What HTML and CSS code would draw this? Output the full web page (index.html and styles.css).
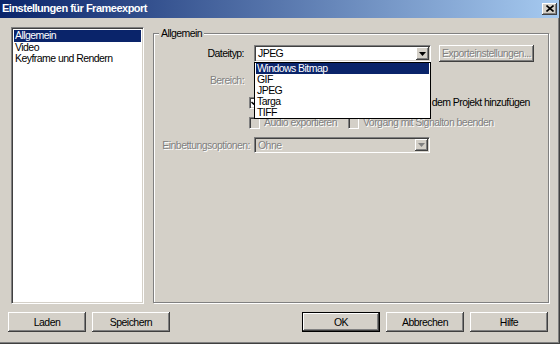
FILE: index.html
```html
<!DOCTYPE html>
<html lang="de">
<head>
<meta charset="utf-8">
<title>Einstellungen für Frameexport</title>
<link rel="stylesheet" href="styles.css">
</head>
<body>
<div class="window">
  <div class="titlebar">
    <span class="title">Einstellungen für Frameexport</span>
    <span class="close">
      <svg width="8" height="7" viewBox="0 0 8 7"><path d="M0.5 0.5 L7.5 6.5 M7.5 0.5 L0.5 6.5" stroke="#000" stroke-width="1.6" fill="none"/></svg>
    </span>
  </div>
  <div class="main">
    <ul class="listbox">
      <li class="sel">Allgemein</li>
      <li>Video</li>
      <li>Keyframe und Rendern</li>
    </ul>
    <div class="group">
      <span class="legend">Allgemein</span>
      <div class="row">
        <span class="lbl">Dateityp:</span>
        <div class="combo">
          <span class="combo-text">JPEG</span>
          <span class="arrow-btn"><svg width="7" height="4" viewBox="0 0 7 4"><path d="M0 0 H7 L3.5 4 Z" fill="#000"/></svg></span>
          <ul class="dropdown">
            <li class="sel">Windows Bitmap</li>
            <li>GIF</li>
            <li>JPEG</li>
            <li>Targa</li>
            <li>TIFF</li>
          </ul>
        </div>
        <span class="btn btn-export disabled">Exporteinstellungen...</span>
      </div>
      <div class="row row-range">
        <span class="lbl disabled">Bereich:</span>
      </div>
      <div class="checks">
        <div class="check-row">
          <span class="check-item">
            <span class="box"><svg width="7" height="7" viewBox="0 0 7 7"><path d="M0.5 3 L2.5 5 L6.5 1" stroke="#000" stroke-width="1.5" fill="none"/></svg></span>
            <span>Die exportierten Frames automatisch zu dem Projekt hinzufügen</span>
          </span>
        </div>
        <div class="check-row">
          <span class="check-item check-audio">
            <span class="box box-off"></span>
            <span class="disabled">Audio exportieren</span>
          </span>
          <span class="check-item">
            <span class="box box-off"></span>
            <span class="disabled">Vorgang mit Signalton beenden</span>
          </span>
        </div>
      </div>
      <div class="row row-embed">
        <span class="lbl lbl-embed disabled">Einbettungsoptionen:</span>
        <div class="combo combo-off">
          <span class="combo-text disabled">Ohne</span>
          <span class="arrow-btn"><svg width="7" height="4" viewBox="0 0 7 4"><path d="M0 0 H7 L3.5 4 Z" fill="#808080"/></svg></span>
        </div>
      </div>
    </div>
  </div>
  <div class="footer">
    <div class="btn-group">
      <span class="btn">Laden</span>
      <span class="btn">Speichern</span>
    </div>
    <div class="btn-group">
      <span class="btn btn-default">OK</span>
      <span class="btn">Abbrechen</span>
      <span class="btn">Hilfe</span>
    </div>
  </div>
</div>
</body>
</html>
```
FILE: styles.css
```css
* { box-sizing: border-box; margin: 0; padding: 0; }
html, body { width: 560px; height: 344px; overflow: hidden; }
body {
  font-family: "Liberation Sans", Arial, sans-serif;
  font-size: 10.5px;
  letter-spacing: -0.55px;
  line-height: 13px;
  color: #000;
  background: #d4d0c8;
}
.window {
  width: 560px;
  height: 344px;
  display: flex;
  flex-direction: column;
  background: #d4d0c8;
  border-right: 1px solid #404040;
  border-bottom: 1px solid #404040;
  box-shadow: inset -1px -1px 0 #808080;
}
.titlebar {
  height: 18px;
  flex: none;
  display: flex;
  align-items: center;
  justify-content: space-between;
  padding: 0 2px 1px 2px;
  background: linear-gradient(to right, #0a246a 0%, #a6caf0 100%);
}
.title {
  color: #fff;
  font-family: "Liberation Sans", Arial, sans-serif;
  font-weight: bold;
  font-size: 11px;
  letter-spacing: -0.5px;
}
.close {
  width: 15px;
  height: 12px;
  background: #d4d0c8;
  box-shadow: inset -1px -1px 0 #404040, inset 1px 1px 0 #fff, inset -2px -2px 0 #808080;
  display: flex;
  align-items: center;
  justify-content: center;
}
.main {
  display: flex;
  align-items: flex-start;
  gap: 9px;
  padding: 9px 0 0 11px;
  flex: none;
}
.listbox {
  width: 133px;
  height: 277px;
  list-style: none;
  background: #fff;
  border-top: 1px solid #808080;
  border-left: 1px solid #808080;
  border-right: 1px solid #fff;
  border-bottom: 1px solid #fff;
  box-shadow: inset 1px 1px 0 #404040, inset -1px -1px 0 #d4d0c8;
  padding: 1px;
}
.listbox li {
  height: 11.5px;
  line-height: 11.5px;
  padding-left: 1px;
  margin: 0 1px;
}
.listbox li:first-child { margin-top: 1px; }
.sel { background: #0a246a; color: #fff; }
.group {
  position: relative;
  margin-top: 6px;
  width: 396px;
  height: 270px;
  border: 1px solid #808080;
  box-shadow: inset 1px 1px 0 #fff, 1px 1px 0 #fff;
  padding-top: 11px;
}
.legend {
  position: absolute;
  top: -7px;
  left: 5px;
  padding: 0 2px;
  background: #d4d0c8;
  line-height: 13px;
}
.row {
  display: flex;
  align-items: center;
}
.lbl {
  flex: none;
  width: 90px;
  margin-right: 10px;
  text-align: right;
}
.lbl-embed { width: 96px; margin-right: 4px; }
.disabled { color: #808080; text-shadow: 1px 1px 0 #fff; }
.combo {
  position: relative;
  flex: none;
  width: 177px;
  height: 17px;
  background: #fff;
  border-top: 1px solid #808080;
  border-left: 1px solid #808080;
  border-right: 1px solid #fff;
  border-bottom: 1px solid #fff;
  box-shadow: inset 1px 1px 0 #404040, inset -1px -1px 0 #d4d0c8;
  display: flex;
  align-items: center;
  justify-content: space-between;
  padding: 1px 1px 1px 3px;
}
.combo-off { width: 176px; height: 16px; background: #d4d0c8; }
.arrow-btn {
  width: 13px;
  height: 13px;
  background: #d4d0c8;
  box-shadow: inset -1px -1px 0 #404040, inset 1px 1px 0 #fff, inset -2px -2px 0 #808080;
  display: flex;
  align-items: center;
  justify-content: center;
}
.combo-off .arrow-btn { height: 12px; }
.dropdown {
  position: absolute;
  left: -1px;
  top: 16px;
  width: 177px;
  height: 57px;
  list-style: none;
  background: #fff;
  border: 1px solid #000;
  padding: 0 1px;
  z-index: 2;
}
.dropdown li {
  height: 11px;
  line-height: 11px;
  padding-left: 1px;
}
.btn {
  display: flex;
  align-items: center;
  justify-content: center;
  width: 78px;
  height: 20px;
  background: #d4d0c8;
  box-shadow: inset -1px -1px 0 #404040, inset 1px 1px 0 #fff, inset -2px -2px 0 #808080, inset 2px 2px 0 #d4d0c8;
}
.btn-export { width: 95px; height: 17px; margin-left: 8px; }
.btn-default { border: 1px solid #000; }
.row-range { margin-top: 12px; }
.checks { margin-top: 9px; display: flex; flex-direction: column; gap: 7px; }
.check-row { display: flex; padding-left: 95px; height: 13px; align-items: center; }
.check-item { display: flex; align-items: center; gap: 4px; white-space: nowrap; }
.check-audio { width: 99px; }
.box {
  flex: none;
  width: 11px;
  height: 12px;
  background: #fff;
  border-top: 1px solid #808080;
  border-left: 1px solid #808080;
  border-right: 1px solid #fff;
  border-bottom: 1px solid #fff;
  box-shadow: inset 1px 1px 0 #404040, inset -1px -1px 0 #d4d0c8;
  display: flex;
  align-items: center;
  justify-content: center;
}
.box-off { background: #d4d0c8; }
.row-embed { margin-top: 8px; }
.footer {
  display: flex;
  justify-content: space-between;
  margin-top: 8px;
  padding: 0 11px 0 8px;
}
.btn-group { display: flex; gap: 6px; }
```
